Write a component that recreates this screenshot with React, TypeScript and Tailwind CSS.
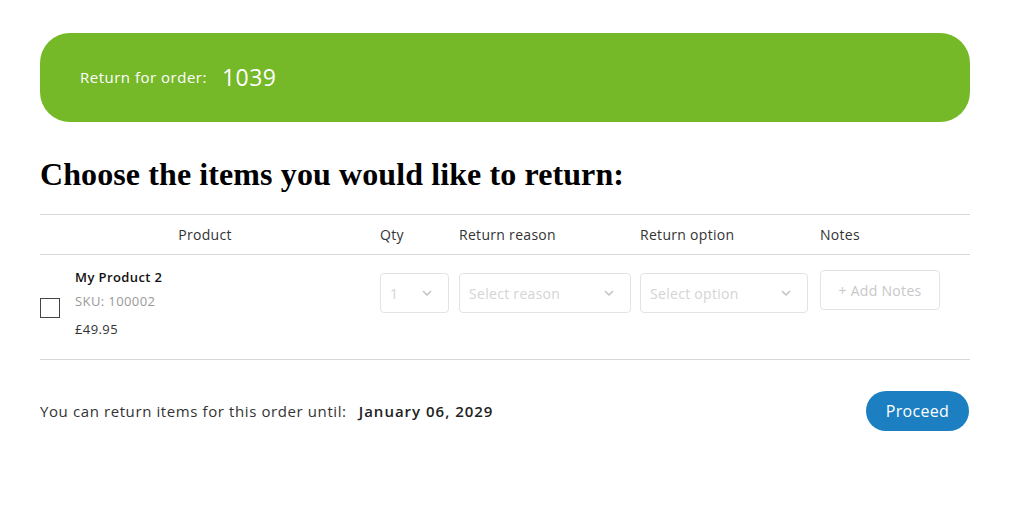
const ORDER = {
  number: '1039',
  until: 'January 06, 2029',
  items: [{ name: 'My Product 2', sku: '100002', price: '£49.95', qty: 1 }],
}

const sans = "font-['Open_Sans','Noto_Sans',sans-serif]"

function Chevron() {
  return (
    <svg width="12" height="12" viewBox="0 0 12 12" fill="none" stroke="#c3c3c3" strokeWidth="1.6" strokeLinecap="round" strokeLinejoin="round">
      <path d="M2.5 4.5 6 8l3.5-3.5" />
    </svg>
  )
}

function Select({ label, width }: { label: string; width: string }) {
  return (
    <div className={`${width} h-10 border border-[#e3e3e3] rounded-[4px] flex items-center justify-between pl-[9px] pr-[15px] text-[14px] tracking-[0.3px] text-[#d4d4d4]`}>
      <span>{label}</span>
      <Chevron />
    </div>
  )
}

export default function App() {
  return (
    <div className={`min-h-screen bg-white pl-10 pr-[56px] pt-[33px] text-[#222] ${sans}`}>
      <div className="bg-[#75b828] rounded-[30px] h-[89px] flex items-center pl-10 gap-[15px] text-white">
        <span className="text-[15px] tracking-[0.5px]">Return for order:</span>
        <span className="text-[23px] tracking-[0.5px]">{ORDER.number}</span>
      </div>

      <h1 className="mt-[32px] mb-[19px] text-[32px] leading-[41px] font-bold tracking-[0.1px] text-black font-['Liberation_Serif','Times_New_Roman',serif]">
        Choose the items you would like to return:
      </h1>

      <div className="border-t border-[#d8d8d8]">
        <div className="grid grid-cols-[330px_79px_181px_180px_1fr] h-10 items-center border-b border-[#d8d8d8] text-[14px] tracking-[0.3px] text-[#333]">
          <div className="text-center">Product</div>
          <div className="px-[10px]">Qty</div>
          <div className="px-[10px]">Return reason</div>
          <div className="px-[10px]">Return option</div>
          <div className="px-[10px]">Notes</div>
        </div>
        {ORDER.items.map((item) => (
          <div key={item.sku} className="grid grid-cols-[330px_79px_181px_180px_1fr] h-[105px] border-b border-[#d8d8d8]">
            <div className="flex items-center gap-[15px]">
              <div className="w-5 h-5 border border-[#444] mt-[1px]" />
              <div className="flex flex-col text-[13px] leading-[14px] tracking-[0.4px] -mt-[8px]">
                <span className="font-semibold text-[#111]">{item.name}</span>
                <span className="mt-[10px] text-[#999]">SKU: {item.sku}</span>
                <span className="mt-[14px] text-[#333]">{item.price}</span>
              </div>
            </div>
            <div className="px-[10px] pt-[18px]">
              <Select label={String(item.qty)} width="w-[69px]" />
            </div>
            <div className="px-[10px] pt-[18px]">
              <Select label="Select reason" width="w-[172px]" />
            </div>
            <div className="px-[10px] pt-[18px]">
              <Select label="Select option" width="w-[168px]" />
            </div>
            <div className="px-[10px] pt-[15px]">
              <button className="w-[120px] h-10 border border-[#e3e3e3] rounded-[4px] text-[14px] tracking-[0.3px] text-[#c8c8c8]">
                + Add Notes
              </button>
            </div>
          </div>
        ))}
      </div>

      <div className="flex items-center justify-between mt-[31px]">
        <p className="text-[15px] tracking-[0.6px] text-[#333]">
          You can return items for this order until:
          <span className="ml-3 font-semibold tracking-[1px] text-[#222]">{ORDER.until}</span>
        </p>
        <button className="bg-[#1c7fc2] text-white text-[16px] tracking-[0.3px] rounded-full w-[103px] h-10 mr-[1px]">
          Proceed
        </button>
      </div>
    </div>
  )
}
